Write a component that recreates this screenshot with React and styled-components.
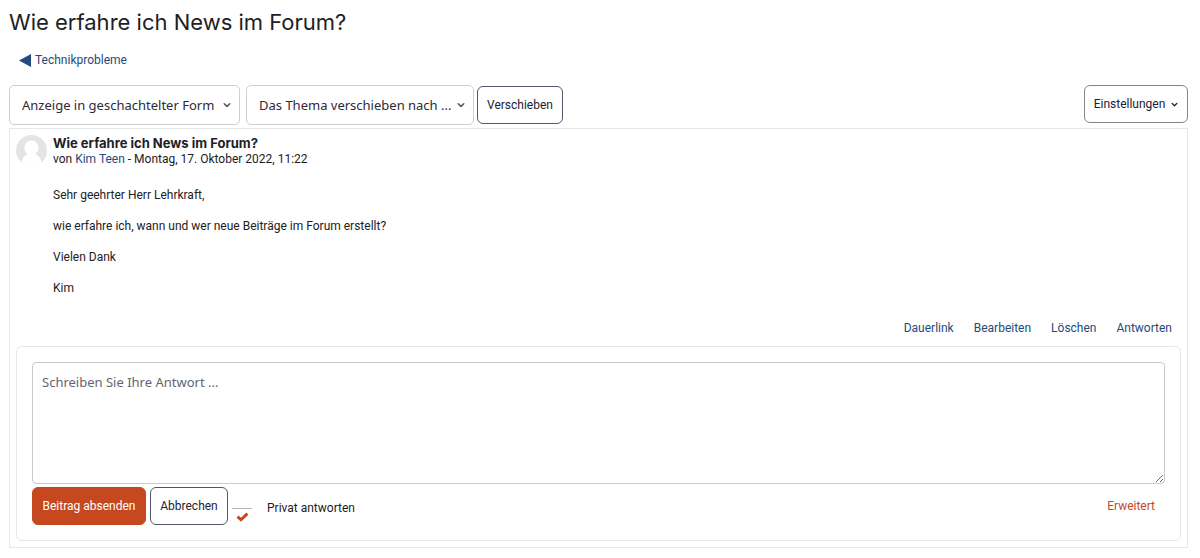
import React from "react"
import styled, { createGlobalStyle } from "styled-components"

const GlobalStyle = createGlobalStyle`
  * {
    box-sizing: border-box;
  }
  body {
    margin: 0;
    background-color: #fff;
    color: #1d2125;
    font-family: Roboto, sans-serif;
    font-size: 12px;
    line-height: 16px;
  }
`

const Page = styled.main`
  padding: 8px 12px 10px 9px;
`

const Title = styled.h1`
  margin: 0;
  font-family: Inter, sans-serif;
  font-size: 22px;
  font-weight: 400;
  line-height: 28px;
`

const Link = styled.a`
  color: ${(props) => (props.$accent ? "#c5481f" : "#254a80")};
  text-decoration: none;
  &:hover {
    text-decoration: underline;
  }
`

const BackLink = styled(Link)`
  display: flex;
  align-items: center;
  gap: 4px;
  width: fit-content;
  margin: 16px 0 0 10px;
`

const Toolbar = styled.div`
  display: flex;
  align-items: center;
  margin-top: 17px;
  padding-bottom: 3px;
`

const SelectWrapper = styled.div`
  position: relative;
  width: ${(props) => props.$width};
  margin-right: ${(props) => props.$gap};
  svg {
    position: absolute;
    right: 9px;
    top: 16px;
    pointer-events: none;
  }
`

const Select = styled.select`
  appearance: none;
  display: block;
  width: 100%;
  height: 40px;
  padding: 0 18px 0 12px;
  border: 1px solid #ccced0;
  border-radius: 5px;
  background-color: #fff;
  color: #2b2b3c;
  font-family: "Noto Sans", sans-serif;
  font-size: 13px;
`

const Button = styled.button`
  display: flex;
  align-items: center;
  justify-content: center;
  gap: 6px;
  width: ${(props) => props.$width};
  height: 38px;
  padding: 0;
  border: 1px solid ${(props) => (props.$primary ? "#c5481f" : "#55556a")};
  border-radius: 6px;
  background-color: ${(props) => (props.$primary ? "#c5481f" : "#fff")};
  color: ${(props) => (props.$primary ? "#fff" : "#222235")};
  font-family: inherit;
  font-size: 12px;
  white-space: nowrap;
`

const SettingsButton = styled(Button)`
  align-self: flex-start;
  margin-left: auto;
  border-color: #85858f;
`

const Post = styled.article`
  padding: 6px;
  border: 1px solid #e6e7e8;
`

const PostHeader = styled.header`
  display: flex;
  gap: 6px;
  svg {
    flex: none;
  }
`

const Subject = styled.h2`
  margin: 0;
  font-family: Inter, sans-serif;
  font-size: 13px;
  font-weight: 700;
  line-height: 16px;
`

const Message = styled.div`
  padding: 20px 0 0 37px;
  p {
    margin: 0 0 15px;
    line-height: 16px;
  }
`

const Actions = styled.nav`
  display: flex;
  justify-content: flex-end;
  gap: 20px;
  padding: 9px 9px 10px 0;
`

const ReplyForm = styled.form`
  padding: 15px;
  border: 1px solid #e6e7e8;
  border-radius: 6px;
`

const ReplyText = styled.textarea`
  display: block;
  width: 100%;
  height: 122px;
  padding: 9px;
  border: 1px solid #c8cacc;
  border-radius: 4px;
  font-family: "Noto Sans", sans-serif;
  font-size: 13px;
  line-height: 20px;
  resize: vertical;
  &::placeholder {
    color: #64646f;
  }
`

const FormFooter = styled.div`
  display: flex;
  align-items: center;
  gap: 4px;
  padding-top: 3px;
  ${Link} {
    margin-left: auto;
    padding-right: 10px;
  }
`

const PrivateLabel = styled.label`
  position: relative;
  display: flex;
  align-items: center;
  gap: 15px;
  padding-top: 4px;
  svg {
    position: absolute;
    left: 4px;
    top: 16px;
    visibility: hidden;
    pointer-events: none;
  }
  input:checked + svg {
    visibility: visible;
  }
`

const Checkbox = styled.input`
  appearance: none;
  width: 20px;
  height: 1px;
  margin: 0;
  background-color: #b4b5b9;
`

const Chevron = ({ size = 8, color = "#505868" }) => (
  <svg width={size} height={size} viewBox="0 0 8 8" aria-hidden="true">
    <path
      d="M1.2 2.7 4 5.4 6.8 2.7"
      fill="none"
      stroke={color}
      strokeWidth="1.5"
      strokeLinecap="round"
      strokeLinejoin="round"
    />
  </svg>
)

const Avatar = () => (
  <svg width="31" height="31" viewBox="0 0 31 31" aria-hidden="true">
    <defs>
      <clipPath id="avatar">
        <circle cx="15.5" cy="15.5" r="15.5" />
      </clipPath>
    </defs>
    <g clipPath="url(#avatar)">
      <rect width="31" height="31" fill="#e4e4e4" />
      <path
        d="M15.5 5.6c-4 0-7 3.1-7 7 0 2.7 1.2 5 3.1 6.3C8 20.3 5.8 23.6 5.3 28V31h20.4v-3c-.5-4.4-2.7-7.7-6.3-9.1 1.9-1.3 3.1-3.6 3.1-6.3 0-3.9-3-7-7-7z"
        fill="#fff"
      />
    </g>
  </svg>
)

const paragraphs = [
  "Sehr geehrter Herr Lehrkraft,",
  "wie erfahre ich, wann und wer neue Beiträge im Forum erstellt?",
  "Vielen Dank",
  "Kim",
]

const actions = ["Dauerlink", "Bearbeiten", "Löschen", "Antworten"]

const App = () => {
  return (
    <>
      <GlobalStyle />
      <Page>
        <Title>Wie erfahre ich News im Forum?</Title>
        <BackLink href="#">
          <svg width="12" height="14" viewBox="0 0 12 14" aria-hidden="true">
            <path d="M0 7.5 12 1v13z" fill="#254a80" />
          </svg>
          Technikprobleme
        </BackLink>
        <Toolbar>
          <SelectWrapper $width="231px" $gap="6px">
            <Select aria-label="Anzeigemodus">
              <option>Anzeige in geschachtelter Form</option>
            </Select>
            <Chevron />
          </SelectWrapper>
          <SelectWrapper $width="228px" $gap="3px">
            <Select aria-label="Thema verschieben">
              <option>Das Thema verschieben nach ...</option>
            </Select>
            <Chevron />
          </SelectWrapper>
          <Button type="button" $width="86px">
            Verschieben
          </Button>
          <SettingsButton type="button" $width="104px">
            Einstellungen
            <Chevron size={7} color="#1d2125" />
          </SettingsButton>
        </Toolbar>
        <Post>
          <PostHeader>
            <Avatar />
            <div>
              <Subject>Wie erfahre ich News im Forum?</Subject>
              <div>
                von <Link href="#">Kim Teen</Link> - Montag, 17. Oktober 2022,
                11:22
              </div>
            </div>
          </PostHeader>
          <Message>
            {paragraphs.map((text) => (
              <p key={text}>{text}</p>
            ))}
          </Message>
          <Actions>
            {actions.map((action) => (
              <Link href="#" key={action}>
                {action}
              </Link>
            ))}
          </Actions>
          <ReplyForm onSubmit={(e) => e.preventDefault()}>
            <ReplyText
              aria-label="Antwort"
              placeholder="Schreiben Sie Ihre Antwort ..."
            />
            <FormFooter>
              <Button $primary $width="114px">
                Beitrag absenden
              </Button>
              <Button type="button" $width="78px">
                Abbrechen
              </Button>
              <PrivateLabel>
                <Checkbox type="checkbox" defaultChecked />
                <svg width="13" height="10" viewBox="0 0 13 10" aria-hidden="true">
                  <path
                    d="M1.6 4.6 5 7.8 11.4 1.6"
                    fill="none"
                    stroke="#c5481f"
                    strokeWidth="3"
                  />
                </svg>
                Privat antworten
              </PrivateLabel>
              <Link href="#" $accent>
                Erweitert
              </Link>
            </FormFooter>
          </ReplyForm>
        </Post>
      </Page>
    </>
  )
}

export default App
